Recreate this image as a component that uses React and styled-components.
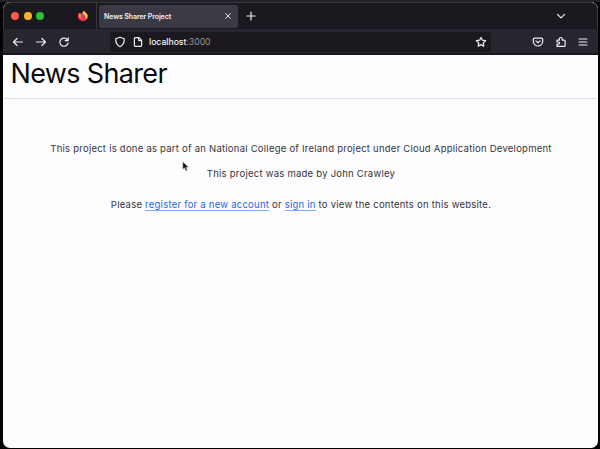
import React from 'react';
import styled, { createGlobalStyle } from 'styled-components';

const Global = createGlobalStyle`
  * { box-sizing: border-box; }
  body { margin: 0; background: #030305; font-family: Inter, "Liberation Sans", sans-serif; overflow: hidden; }
`;

const Desktop = styled.main`
  height: 449px;
  width: 600px;
  padding: 2px 2px 2px 3px;
  background: linear-gradient(#222126 0 2px, #030305 2px);
`;

const Window = styled.div`
  position: relative;
  height: 446px;
  display: flex;
  flex-direction: column;
  border-radius: 7px;
  overflow: hidden;
  background: #fdfcfe;
`;

const TabStrip = styled.header`
  height: 27px;
  flex: none;
  display: flex;
  align-items: center;
  background: #1b191f;
  border: 1px solid #38373d;
  border-bottom: 0;
  border-radius: 7px 7px 0 0;
  color: #f0eff4;
`;

const Lights = styled.div`
  display: flex;
  gap: 4.5px;
  padding-left: 7.2px;
  width: 73px;
`;

const Light = styled.span`
  width: 8px;
  height: 8px;
  border-radius: 50%;
  background: ${({ $color }) => $color};
`;

const Divider = styled.span`
  width: 1px;
  height: 26px;
  background: #38373d;
  margin: 0 2px 0 7px;
`;

const Tab = styled.div`
  width: 139px;
  height: 23px;
  margin-right: 7px;
  padding: 0 5px;
  display: flex;
  align-items: center;
  justify-content: space-between;
  border-radius: 3px;
  background: #3b3943;
  font-size: 7.1px;
  font-weight: 600;
  letter-spacing: -0.15px;
`;

const Glyph = styled.svg`
  flex: none;
  display: block;
  width: ${({ $size }) => $size}px;
  height: ${({ $size }) => $size}px;
  margin-left: ${({ $left }) => $left || 0}px;
  fill: none;
  stroke: currentColor;
  stroke-width: ${({ $weight }) => $weight || 1.2};
  stroke-linecap: round;
  stroke-linejoin: round;
`;

const Toolbar = styled.nav`
  height: 26px;
  flex: none;
  display: flex;
  align-items: center;
  padding-top: 2px;
  background: #27252e;
  border-bottom: 2px solid #19171d;
  color: #eeedf2;
`;

const AddressBar = styled.div`
  display: flex;
  align-items: center;
  width: 381px;
  height: 20px;
  margin-left: 40px;
  padding-right: 4px;
  border-radius: 3px;
  background: #1b191f;
`;

const Address = styled.span`
  flex: 1;
  margin-left: 5px;
  font-size: 8.7px;
  line-height: 12px;
  letter-spacing: -0.04px;
  color: #96959b;
`;

const Host = styled.span`
  color: #f5f4f8;
  font-weight: 500;
`;

const SiteHeader = styled.header`
  height: 44px;
  flex: none;
  padding-left: 7.5px;
  border-bottom: 1px solid #e1e0e4;
`;

const Title = styled.h1`
  margin: 0;
  color: #09090b;
  font-size: 27px;
  line-height: 38px;
  font-weight: 420;
  letter-spacing: -0.65px;
`;

const Content = styled.section`
  padding: 42px 0 0 1px;
  text-align: center;
`;

const Paragraph = styled.p`
  margin: 0 0 ${({ $gap }) => $gap || 0}px;
  color: #36353a;
  font-size: 9.5px;
  line-height: 15px;
  letter-spacing: 0.24px;
  white-space: nowrap;
`;

const Link = styled.a`
  color: #1f68e0;
  text-decoration: underline;
  text-decoration-color: #79adf5;
  text-decoration-thickness: 1px;
  text-underline-offset: 2px;
  text-decoration-skip-ink: none;
`;

const Pointer = styled.svg`
  position: absolute;
  left: 179px;
  top: 159px;
  width: 7px;
  height: 11px;
`;

function Icon({ children, size = 12, left, weight }) {
  return <Glyph viewBox="0 0 12 12" $size={size} $left={left} $weight={weight}>{children}</Glyph>;
}

function Firefox() {
  return (
    <Glyph viewBox="0 0 12 12" $size={12}>
      <g stroke="none">
        <path fill="#ef3048" d="M2 2.5 3.2 3.4 4.4 2.6 4.2 3.7 6 4 7.2 1 9 3 10.6 4.2C12 7.8 9.8 11 6.2 11 2.5 11 .4 8.2 1 5.2 1.1 4 1.7 3.4 2 2.5Z" />
        <path fill="#ffca42" d="M5.3 3.8C5.3 2.2 6.5 1.1 7.2.7 7.4 2.1 9 2.5 9.5 4 10.9 5 10.9 8.2 8.3 9.2 9 7 8.4 4.9 5.3 3.8Z" />
        <path fill="#ff8050" d="M1.4 4.4C3 3.4 4.5 4 5.5 4.9L4.3 5.5C3.2 6.2 4 8 5.7 8.4 4.2 9.3 1.8 8.2 1.4 4.4Z" />
        <circle cx="5.6" cy="5.7" r="1.5" fill="#8c55b4" />
      </g>
    </Glyph>
  );
}

export default function App() {
  return (
    <>
      <Global />
      <Desktop>
        <Window>
          <TabStrip>
            <Lights>
              <Light $color="#fc5652" />
              <Light $color="#fdb32c" />
              <Light $color="#26c138" />
            </Lights>
            <Firefox />
            <Divider />
            <Tab>
              News Sharer Project
              <Icon size={10} weight={1.1}><path d="m3 3 6 6m0-6L3 9" /></Icon>
            </Tab>
            <Icon><path d="M6 2v8M2 6h8" /></Icon>
            <Icon left={298}><path d="m2.5 4.3 3.5 3.5 3.5-3.5" /></Icon>
          </TabStrip>
          <Toolbar>
            <Icon left={9}><path d="M10.5 6h-9m3.6-3.5L1.5 6l3.6 3.5" /></Icon>
            <Icon left={11}><path d="M1.5 6h9M6.9 2.5 10.5 6 6.9 9.5" /></Icon>
            <Icon left={11}><path d="M9.6 4.2A4.1 4.1 0 1 0 10 7M10.2 1.7v3H7.2" /></Icon>
            <AddressBar>
              <Icon left={4}><path d="M6 1.3 10.3 2.8c.1 3.7-.7 6.2-4.3 7.9-3.6-1.7-4.4-4.2-4.3-7.9Z" /></Icon>
              <Icon left={6}><path d="M3.4 1.7H7L9.6 4.3v5.2c0 .5-.4.8-.8.8H3.2c-.5 0-.8-.4-.8-.8V2.6c0-.6.4-.9 1-.9ZM6.7 1.9v2.7h2.7" /></Icon>
              <Address><Host>localhost</Host>:3000</Address>
              <Icon><path d="m6 1.4 1.4 2.8 3.2.5-2.3 2.2.5 3.2L6 8.6l-2.8 1.5.5-3.2-2.3-2.2 3.2-.5Z" /></Icon>
            </AddressBar>
            <Icon left={41}><path d="M2.3 2.2h7.4c.6 0 1 .4 1 1v2.1a4.7 4.7 0 0 1-9.4 0V3.2c0-.6.4-1 1-1ZM3.9 4.9 6 6.8l2.1-1.9" /></Icon>
            <Icon left={11}><path d="M2 4.1h2.4V2.9a1.4 1.4 0 0 1 2.8 0v1.2h1.9c.6 0 1 .4 1 1v4.3c0 .6-.4 1-1 1H2V8.2h1.4a1.1 1.1 0 0 0 0-2.2H2Z" /></Icon>
            <Icon left={10}><path d="M2.1 3h7.8M2.1 6h7.8M2.1 9h7.8" /></Icon>
          </Toolbar>
          <SiteHeader><Title>News Sharer</Title></SiteHeader>
          <Content>
            <Paragraph $gap={10}>This project is done as part of an National College of Ireland project under Cloud Application Development</Paragraph>
            <Paragraph $gap={16}>This project was made by John Crawley</Paragraph>
            <Paragraph>Please <Link>register for a new account</Link> or <Link>sign in</Link> to view the contents on this website.</Paragraph>
          </Content>
          <Pointer viewBox="0 0 7 11"><path d="M.8.8v7.5l1.8-1.5 1.3 3 1.4-.6L4 6.3h2.6Z" fill="#111" stroke="#d2d1d5" strokeWidth=".5" /></Pointer>
        </Window>
      </Desktop>
    </>
  );
}
